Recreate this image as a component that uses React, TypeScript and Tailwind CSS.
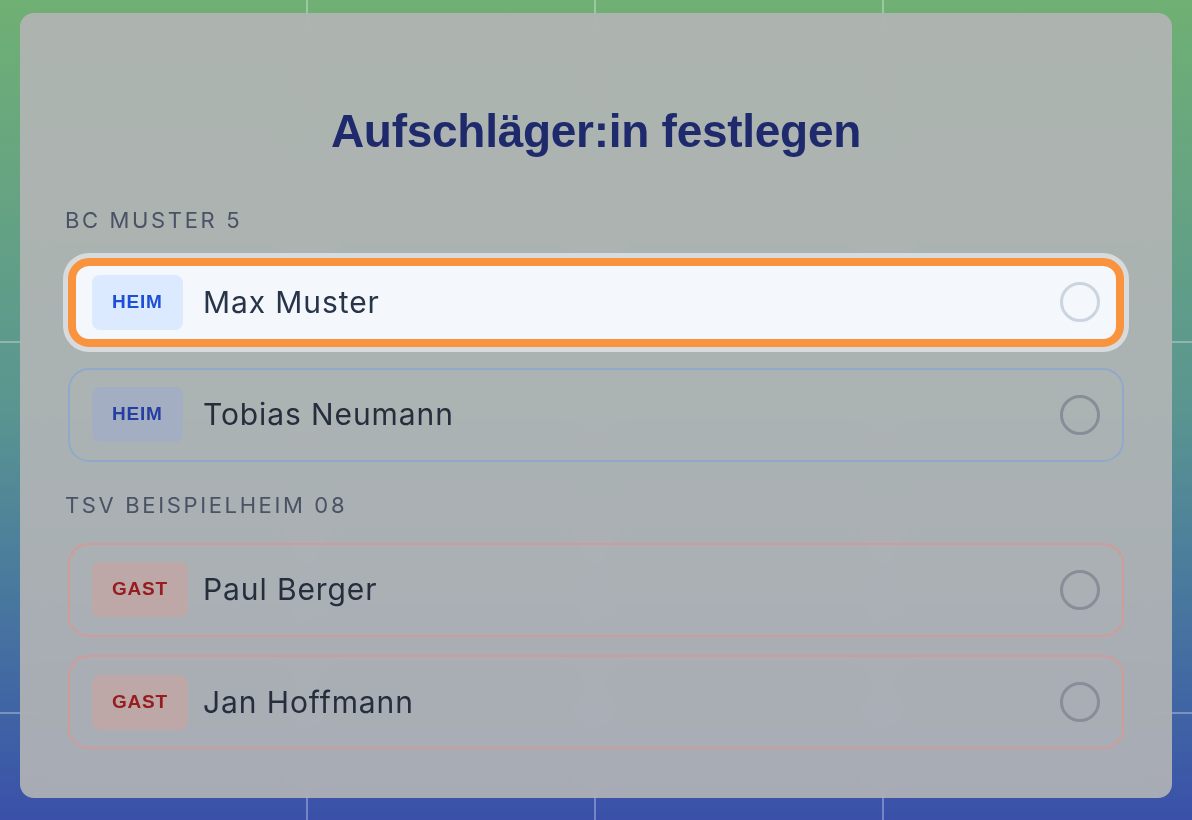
import React from "react";

type Player = {
  name: string;
  side: "heim" | "gast";
  active?: boolean;
};

const teams: { label: string; players: Player[] }[] = [
  {
    label: "BC Muster 5",
    players: [
      { name: "Max Muster", side: "heim", active: true },
      { name: "Tobias Neumann", side: "heim" },
    ],
  },
  {
    label: "TSV Beispielheim 08",
    players: [
      { name: "Paul Berger", side: "gast" },
      { name: "Jan Hoffmann", side: "gast" },
    ],
  },
];

function Badge({ side, active }: { side: "heim" | "gast"; active?: boolean }) {
  const cls =
    side === "heim"
      ? active
        ? "bg-[#dbeafe] text-[#1d4ed8]"
        : "bg-[#a3aec2] text-[#243ea2]"
      : "bg-[#bea7a7] text-[#961c20]";
  return (
    <div className="w-[111px] shrink-0">
      <span
        className={`inline-flex h-[55px] items-center rounded-lg px-5 font-['Liberation_Sans',Arial,sans-serif] text-[19px] font-bold tracking-[0.04em] ${cls}`}
      >
        {side === "heim" ? "HEIM" : "GAST"}
      </span>
    </div>
  );
}

const nameCls = "flex-1 font-['Inter',sans-serif] text-[30px] tracking-[0.03em]";

function PlayerRow({ player }: { player: Player }) {
  if (player.active) {
    return (
      <div className="flex h-[94px] items-center">
        <div className="flex h-[89px] w-full items-center rounded-[21px] border-[8px] border-[#fa933d] bg-[#f4f7fb] pl-[16px] pr-[16px] shadow-[0_0_0_5px_#d8dbde]">
          <Badge side={player.side} active />
          <span className={`${nameCls} text-[#27344a]`}>{player.name}</span>
          <span className="h-10 w-10 rounded-full border-[3px] border-[#cbd5e1]" />
        </div>
      </div>
    );
  }

  const border = player.side === "heim" ? "border-[#90a9cb]" : "border-[#d39b97]";
  return (
    <div
      className={`flex h-[94px] items-center rounded-[21px] border-2 bg-white/[0.02] pl-[22px] pr-[22px] ${border}`}
    >
      <Badge side={player.side} />
      <span className={`${nameCls} text-[#262e3d]`}>{player.name}</span>
      <span className="h-10 w-10 rounded-full border-[3px] border-[#878e97]" />
    </div>
  );
}

export default function App() {
  return (
    <div className="relative min-h-[820px] w-full overflow-hidden bg-gradient-to-b from-[#70b073] via-[#5a9590] to-[#3a50a9]">
      {/* court lines */}
      <div className="absolute inset-y-0 left-[20px] right-[20px] grid grid-cols-4">
        <div className="border-r-2 border-white/30" />
        <div className="border-r-2 border-white/30" />
        <div className="border-r-2 border-white/30" />
        <div />
      </div>
      <div className="absolute left-0 right-0 top-[341px] h-[2px] bg-white/30" />
      <div className="absolute left-0 right-0 top-[712px] h-[2px] bg-white/30" />

      <div className="relative mx-[20px] mt-[13px] rounded-[14px] bg-[#b4b5b6]/90 px-12 pb-[49px] pt-[91px] backdrop-blur-md">
        <h2 className="text-center font-['Liberation_Sans',Arial,sans-serif] text-[46px] font-bold leading-[54px] tracking-[-0.006em] text-[#1f2a6c]">
          Aufschläger:in festlegen
        </h2>

        {teams.map((team, i) => (
          <div key={team.label} className={i === 0 ? "mt-[48px]" : "mt-[29px]"}>
            <div
              className={`-ml-[3px] font-['Inter',sans-serif] text-[22px] uppercase leading-[28px] tracking-[0.12em] text-[#4a5264] ${
                i === 0 ? "mb-[21px]" : "mb-[24px]"
              }`}
            >
              {team.label}
            </div>
            <div className="flex flex-col gap-[18.5px]">
              {team.players.map((p) => (
                <PlayerRow key={p.name} player={p} />
              ))}
            </div>
          </div>
        ))}
      </div>
    </div>
  );
}
